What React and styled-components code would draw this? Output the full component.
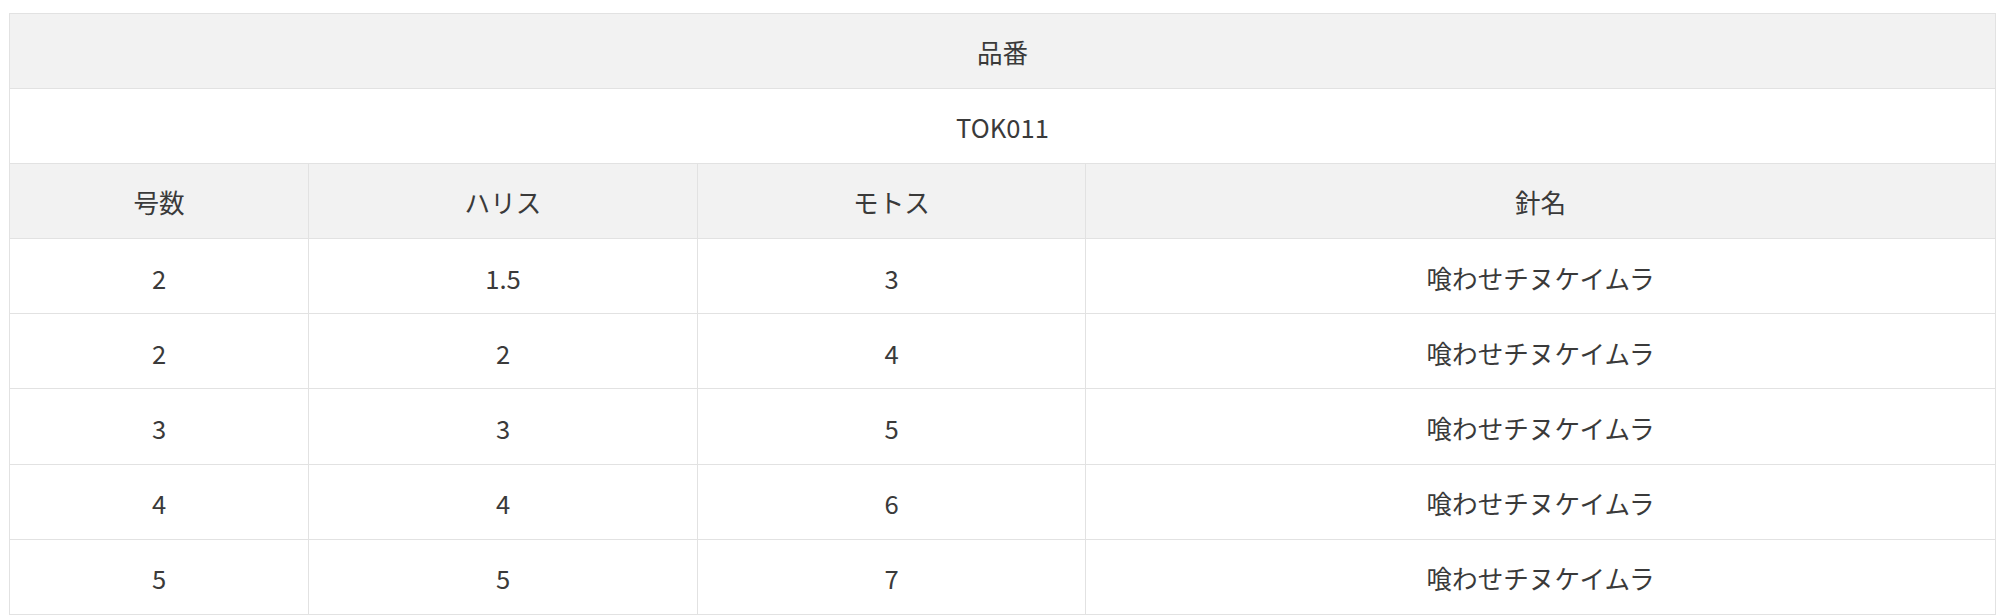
import React from "react";
import styled, { createGlobalStyle } from "styled-components";

const Global = createGlobalStyle`
  html, body { margin: 0; padding: 0; background: #fff; }
  body { font-family: "Noto Sans CJK JP", "Noto Sans", sans-serif; color: #333; }
`;

const Page = styled.div`
  padding: 13px 6px 0 9px;
`;

const Table = styled.table`
  width: 1986px;
  border-collapse: collapse;
  table-layout: fixed;
  font-size: 25.6px;
  color: #3a3a3a;
`;

const Cell = styled.td`
  height: 72.1px;
  padding: 2px 0 0;
  text-align: center;
  vertical-align: middle;
  border: 1px solid #e2e2e2;
  background: ${(p) => (p.$head ? "#f2f2f2" : "#ffffff")};
  font-weight: 400;
  line-height: 1;
`;

const cols = [299, 389, 388, 910];

const rows = [
  ["2", "1.5", "3", "喰わせチヌケイムラ"],
  ["2", "2", "4", "喰わせチヌケイムラ"],
  ["3", "3", "5", "喰わせチヌケイムラ"],
  ["4", "4", "6", "喰わせチヌケイムラ"],
  ["5", "5", "7", "喰わせチヌケイムラ"],
];

export default function App() {
  return (
    <Page>
      <Global />
      <Table>
        <colgroup>
          {cols.map((w, i) => (
            <col key={i} style={{ width: w }} />
          ))}
        </colgroup>
        <tbody>
          <tr>
            <Cell as="th" $head colSpan={4}>品番</Cell>
          </tr>
          <tr>
            <Cell colSpan={4}>TOK011</Cell>
          </tr>
          <tr>
            {["号数", "ハリス", "モトス", "針名"].map((h) => (
              <Cell as="th" $head key={h}>{h}</Cell>
            ))}
          </tr>
          {rows.map((r, i) => (
            <tr key={i}>
              {r.map((c, j) => (
                <Cell key={j}>{c}</Cell>
              ))}
            </tr>
          ))}
        </tbody>
      </Table>
    </Page>
  );
}
